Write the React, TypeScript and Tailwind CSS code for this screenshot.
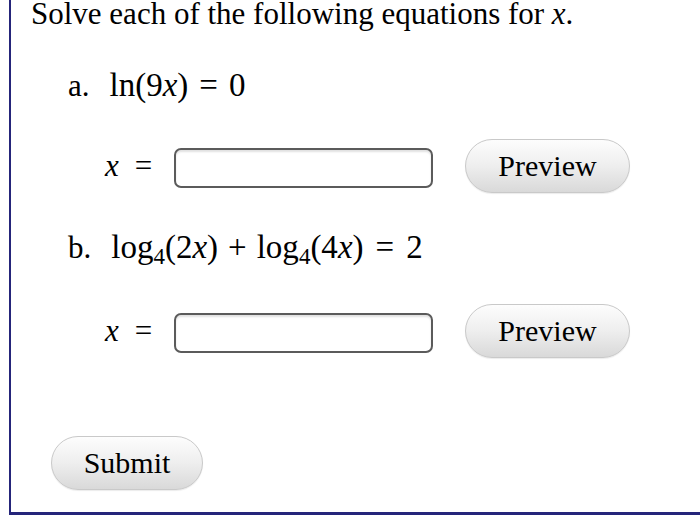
import React from "react";

function Btn({ label, w }: { label: string; w: string }) {
  return (
    <button
      className={`${w} h-[54px] rounded-full border border-[#c9c9c9] bg-gradient-to-b from-[#fdfdfd] via-[#eeeeee] to-[#d9d9d9] font-['Liberation_Serif',serif] text-[30px] leading-none text-black shadow-[0_1px_1px_rgba(0,0,0,0.08)]`}
    >
      {label}
    </button>
  );
}

function Field() {
  return (
    <div className="flex items-start">
      <div className="flex h-[54px] w-[143px] items-center pl-[74px] font-['Liberation_Serif',serif] text-[31px]">
        <span className="italic">x</span>
        <span className="ml-[16px]">=</span>
      </div>
      <div className="mt-[9px] h-[40px] w-[259px] rounded-[7px] border-2 border-[#5b5b5b] bg-white shadow-[inset_0_2px_2px_rgba(0,0,0,0.12)]" />
      <div className="ml-[32px]">
        <Btn label="Preview" w="w-[165px]" />
      </div>
    </div>
  );
}

export default function App() {
  return (
    <div className="h-[516px] w-[700px] overflow-hidden bg-white font-['Liberation_Serif',serif] text-black">
      <div className="ml-[9px] h-[515px] border-b-[3px] border-l-2 border-[#25257a] pl-[20px]">
        <div className="text-[31px] leading-[28px]">
          Solve each of the following equations for <span className="italic">x</span>.
        </div>

        <div className="mt-[42px] flex items-baseline pl-[37px] text-[31px] leading-[31px]">
          <span>a.</span>
          <span className="ml-[20px] text-[33px]">
            ln(9<span className="italic">x</span>)<span className="mx-[11px]">=</span>0
          </span>
        </div>

        <div className="mt-[38px]">
          <Field />
        </div>

        <div className="mt-[39px] flex items-baseline pl-[37px] text-[31px] leading-[31px]">
          <span>b.</span>
          <span className="ml-[20px] text-[33px]">
            log<sub className="text-[23px]">4</sub>(2<span className="italic">x</span>)
            <span className="mx-[10px]">+</span>
            log<sub className="text-[23px]">4</sub>(4<span className="italic">x</span>)
            <span className="mx-[12px]">=</span>2
          </span>
        </div>

        <div className="mt-[41px]">
          <Field />
        </div>

        <div className="ml-[20px] mt-[78px]">
          <Btn label="Submit" w="w-[152px]" />
        </div>
      </div>
    </div>
  );
}
